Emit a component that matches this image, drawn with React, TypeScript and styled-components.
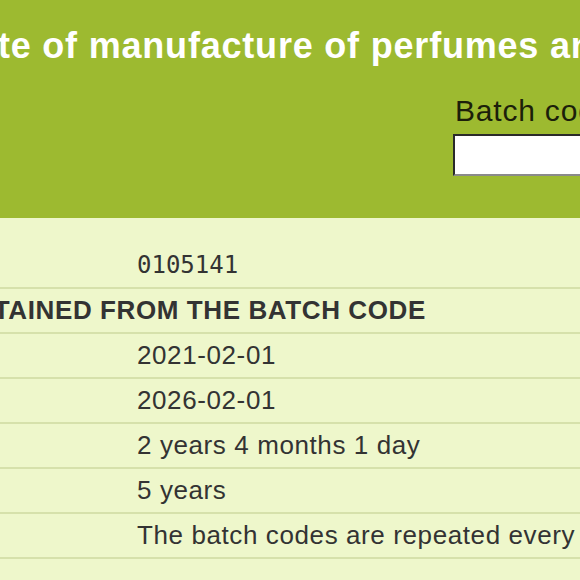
import React from 'react';
import styled, { createGlobalStyle } from 'styled-components';

const GlobalStyle = createGlobalStyle`
  html, body {
    margin: 0;
    padding: 0;
    background: #eef7cb;
    overflow: hidden;
  }
  body {
    font-family: 'Liberation Sans', Arial, sans-serif;
  }
`;

const rows = [
  { label: 'Batch code', value: '0105141', mono: true },
  { heading: 'DATA OBTAINED FROM THE BATCH CODE' },
  { label: 'Date of manufacture', value: '2021-02-01' },
  { label: 'Expiration date', value: '2026-02-01' },
  { label: 'Age', value: '2 years 4 months 1 day' },
  { label: 'Shelf life', value: '5 years' },
  {
    label: 'Note',
    value: 'The batch codes are repeated every 10 years',
  },
];

const App = () => {
  return (
    <>
      <GlobalStyle />
      <Page>
        <Header>
          <Title>Calculate the date of manufacture of perfumes and cosmetics</Title>
          <SearchForm>
            <SearchLabel htmlFor="batch">Batch code:</SearchLabel>
            <SearchInput id="batch" type="text" />
          </SearchForm>
        </Header>
        <Results>
          <tbody>
            {rows.map((row, index) =>
              row.heading ? (
                <Row key={index}>
                  <HeadingCell colSpan={2}>{row.heading}</HeadingCell>
                </Row>
              ) : (
                <Row key={index}>
                  <LabelCell>{row.label}</LabelCell>
                  <ValueCell $mono={row.mono}>{row.value}</ValueCell>
                </Row>
              )
            )}
            <Row>
              <LabelCell />
              <ValueCell />
            </Row>
          </tbody>
        </Results>
      </Page>
    </>
  );
};

export default App;

const Page = styled.div`
  width: 1400px;
  margin-left: -300px;
`;

const Header = styled.div`
  height: 218px;
  background: #9dba30;
  box-sizing: border-box;
  padding-top: 26px;
  display: flex;
  flex-direction: column;
`;

const Title = styled.h1`
  margin: 0 0 0 9px;
  font-size: 36px;
  font-weight: 700;
  letter-spacing: 0.8px;
  line-height: 40px;
  color: #ffffff;
  white-space: nowrap;
`;

const SearchForm = styled.div`
  display: flex;
  flex-direction: column;
  margin-top: 28px;
  margin-left: 753px;
  gap: 6px;
`;

const SearchLabel = styled.label`
  font-size: 30px;
  line-height: 34px;
  letter-spacing: 0.8px;
  color: #1c1f0a;
  padding-left: 2px;
`;

const SearchInput = styled.input`
  width: 300px;
  height: 42px;
  box-sizing: border-box;
  border: 2px solid;
  border-color: #2a2a2a #8a8a8a #8a8a8a #2a2a2a;
  background: #ffffff;
  padding: 0 6px;
  font-size: 24px;
  outline: none;
`;

const Results = styled.table`
  margin-top: 25px;
  width: 100%;
  border-collapse: collapse;
  color: #333333;
`;

const Row = styled.tr`
  height: 45px;
  border-bottom: 2px solid #d6e1ab;
`;

const LabelCell = styled.td`
  width: 437px;
  padding: 0 8px;
  box-sizing: border-box;
  font-size: 26px;
  vertical-align: middle;
`;

const ValueCell = styled.td<{ $mono?: boolean }>`
  padding: 0;
  font-size: ${(props) => (props.$mono ? '24px' : '26px')};
  letter-spacing: ${(props) => (props.$mono ? '0' : '0.6px')};
  font-family: ${(props) =>
    props.$mono
      ? "'DejaVu Sans Mono', 'Liberation Mono', monospace"
      : "'Liberation Sans', Arial, sans-serif"};
  vertical-align: middle;
  white-space: nowrap;
`;

const HeadingCell = styled.td`
  padding: 0 0 0 176px;
  font-size: 26px;
  font-weight: 700;
  letter-spacing: 0.6px;
  white-space: nowrap;
  vertical-align: middle;
`;
